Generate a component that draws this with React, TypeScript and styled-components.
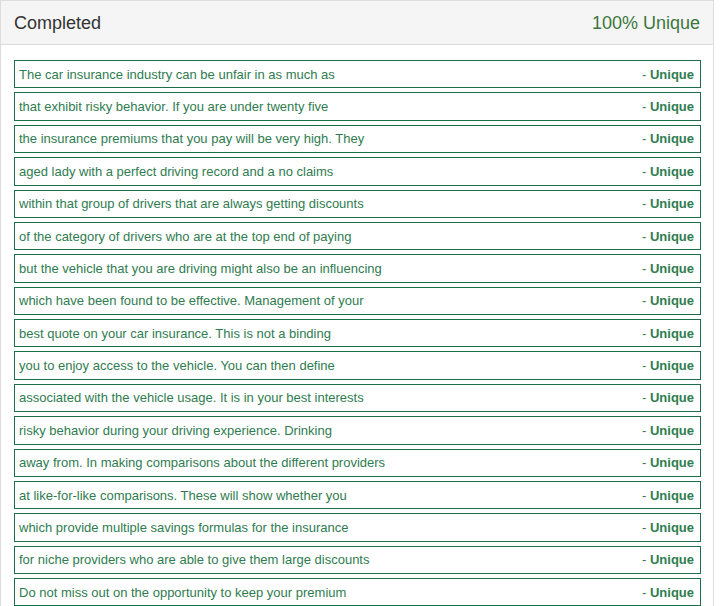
import React from "react";
import styled, { createGlobalStyle } from "styled-components";

const Global = createGlobalStyle`
  html, body { margin: 0; padding: 0; background: #fff; }
  body { font-family: "Liberation Sans", Arial, Helvetica, sans-serif; }
`;

const Panel = styled.div`
  width: 714px;
  box-sizing: border-box;
  border: 1px solid #dddddd;
  border-bottom: none;
  background: #fff;
`;

const Heading = styled.div`
  height: 44px;
  box-sizing: border-box;
  background: #f5f5f5;
  border-bottom: 1px solid #dddddd;
  display: flex;
  align-items: center;
  justify-content: space-between;
  padding: 2px 13px 0 13px;
  font-size: 18px;
`;

const Title = styled.span`
  color: #333333;
`;

const Score = styled.span`
  color: #3c763d;
`;

const Body = styled.div`
  padding: 15px 12px 0 13px;
  display: flex;
  flex-direction: column;
  gap: 4px;
`;

const Row = styled.div`
  display: flex;
  justify-content: space-between;
  align-items: center;
  box-sizing: border-box;
  height: 28.375px;
  border: 1px solid #1f6e4a;
  padding: 0 6px 0 4px;
  font-size: 13px;
  color: #2f7c50;
  white-space: nowrap;
`;

const Tag = styled.span`
  b { font-weight: bold; }
`;

const lines = [
  "The car insurance industry can be unfair in as much as",
  "that exhibit risky behavior. If you are under twenty five",
  "the insurance premiums that you pay will be very high. They",
  "aged lady with a perfect driving record and a no claims",
  "within that group of drivers that are always getting discounts",
  "of the category of drivers who are at the top end of paying",
  "but the vehicle that you are driving might also be an influencing",
  "which have been found to be effective. Management of your",
  "best quote on your car insurance. This is not a binding",
  "you to enjoy access to the vehicle. You can then define",
  "associated with the vehicle usage. It is in your best interests",
  "risky behavior during your driving experience. Drinking",
  "away from. In making comparisons about the different providers",
  "at like-for-like comparisons. These will show whether you",
  "which provide multiple savings formulas for the insurance",
  "for niche providers who are able to give them large discounts",
  "Do not miss out on the opportunity to keep your premium",
];

export default function App() {
  return (
    <>
      <Global />
      <Panel>
        <Heading>
          <Title>Completed</Title>
          <Score>100% Unique</Score>
        </Heading>
        <Body>
          {lines.map((l, i) => (
            <Row key={i}>
              <span>{l}</span>
              <Tag>
                - <b>Unique</b>
              </Tag>
            </Row>
          ))}
        </Body>
      </Panel>
    </>
  );
}
